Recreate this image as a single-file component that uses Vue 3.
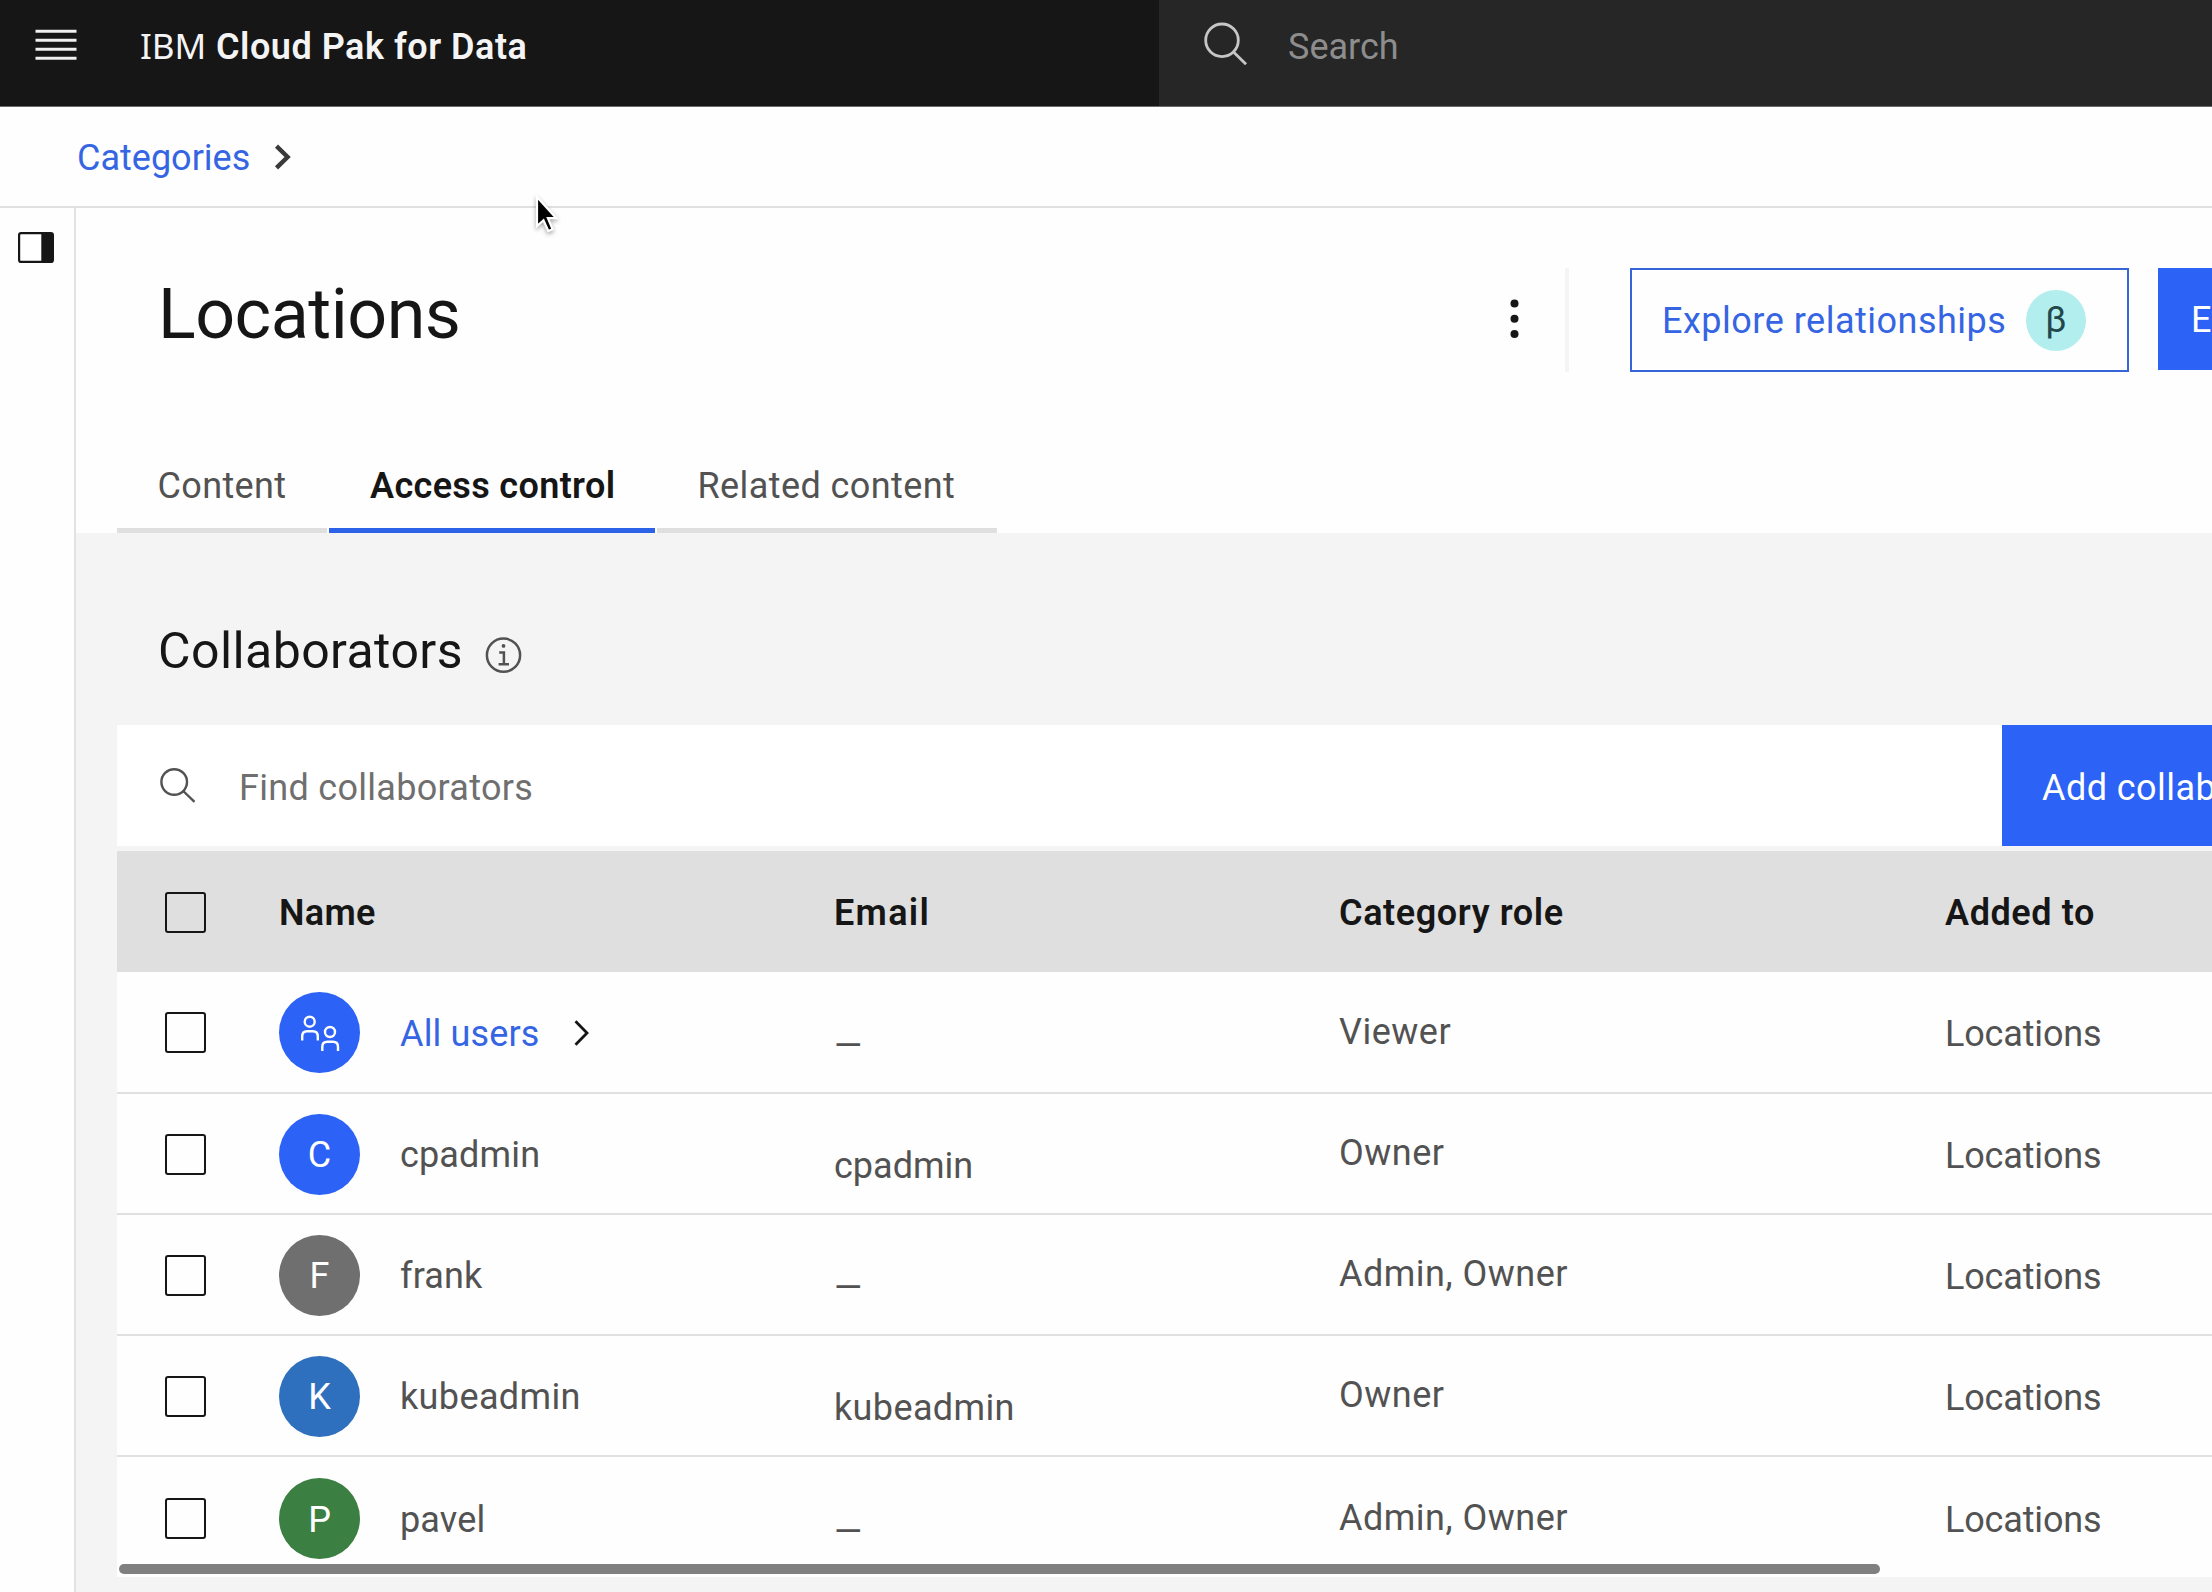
<script setup>
const tabs = [
  { label: 'Content', cls: 'tab-content' },
  { label: 'Access control', cls: 'tab-access active' },
  { label: 'Related content', cls: 'tab-related' },
]

const rows = [
  { name: 'All users', group: true, color: '#2c62f6', email: '—', role: 'Viewer' },
  { name: 'cpadmin', initial: 'C', color: '#2c62f6', email: 'cpadmin', role: 'Owner' },
  { name: 'frank', initial: 'F', color: '#6f6f6f', email: '—', role: 'Admin, Owner' },
  { name: 'kubeadmin', initial: 'K', color: '#2e70bd', email: 'kubeadmin', role: 'Owner' },
  { name: 'pavel', initial: 'P', color: '#3b7f42', email: '—', role: 'Admin, Owner' },
]
</script>

<template>
  <div class="app">
    <header class="topbar">
      <div class="brand">
        <svg class="menu" width="42" height="32" viewBox="0 0 42 32">
          <path d="M0.5 2.3H41.5M0.5 11.3H41.5M0.5 20.3H41.5M0.5 29.3H41.5" stroke="#f0f0f0" stroke-width="3" />
        </svg>
        <span class="ibm">IBM</span>
        <span class="product">Cloud Pak for Data</span>
      </div>
      <div class="global-search">
        <svg width="44" height="44" viewBox="0 0 44 44" fill="none" stroke="#c6c6c6" stroke-width="2.8">
          <circle cx="18" cy="18.3" r="16.3" />
          <path d="M29.5 30L42 42.2" />
        </svg>
        <span>Search</span>
      </div>
    </header>

    <nav class="breadcrumb">
      <a>Categories</a>
      <svg width="18" height="26" viewBox="0 0 18 26" fill="none" stroke="#3a3a3a" stroke-width="4.4">
        <path d="M2.5 2.2L13.6 13L2.5 23.8" />
      </svg>
    </nav>

    <div class="body">
      <aside class="rail">
        <svg width="36" height="31" viewBox="0 0 36 31">
          <rect x="1.1" y="1.1" width="33.8" height="28.8" rx="2" fill="#fff" stroke="#161616" stroke-width="2.2" />
          <path d="M23.3 1H33.5Q35 1 35 2.5V28.5Q35 30 33.5 30H23.3Z" fill="#161616" />
        </svg>
      </aside>

      <main class="main">
        <section class="page-head">
          <div class="title-row">
            <h1>Locations</h1>
            <div class="actions">
              <svg class="overflow" width="10" height="42" viewBox="0 0 10 42" fill="#161616">
                <circle cx="5.5" cy="5.6" r="4" /><circle cx="5.5" cy="20.8" r="4" /><circle cx="5.5" cy="36" r="4" />
              </svg>
              <div class="divider"></div>
              <button class="explore">
                <span class="explore-label">Explore relationships</span>
                <span class="beta">β</span>
              </button>
              <button class="edit">E</button>
            </div>
          </div>
          <div class="tabs">
            <div v-for="t in tabs" :key="t.label" class="tab" :class="t.cls">{{ t.label }}</div>
          </div>
        </section>

        <section class="panel">
          <div class="panel-title">
            <h2>Collaborators</h2>
            <svg width="37" height="37" viewBox="0 0 37 37" fill="none" stroke="#525252" stroke-width="2.5">
              <circle cx="18.5" cy="18.2" r="16.6" />
              <path d="M14.2 15.4H18.9V27.2M13.6 27.2H24" />
              <circle cx="18.5" cy="8.9" r="1.9" fill="#525252" stroke="none" />
            </svg>
          </div>

          <div class="toolbar">
            <div class="find">
              <svg width="36" height="35" viewBox="0 0 36 35" fill="none" stroke="#525252" stroke-width="2.4">
                <circle cx="14.2" cy="14" r="12.8" />
                <path d="M23.2 23L34.5 33.8" />
              </svg>
              <span>Find collaborators</span>
            </div>
            <button class="add">Add collab</button>
          </div>

          <div class="table">
            <div class="row head">
              <div class="c-check"><i class="box"></i></div>
              <div class="c-name">Name</div>
              <div class="c-email email-label">Email</div>
              <div class="c-role">Category role</div>
              <div class="c-added">Added to</div>
            </div>
            <div v-for="r in rows" :key="r.name" class="row item" :class="'row-' + r.name.split(' ')[0]">
              <div class="c-check"><i class="box"></i></div>
              <div class="c-name">
                <span class="avatar" :style="{ background: r.color }">
                  <svg v-if="r.group" width="40" height="36" viewBox="0 0 40 36" fill="none" stroke="#fff" stroke-width="2.4">
                    <circle cx="9.7" cy="6.7" r="5" />
                    <path d="M2.2 25.5V21.5Q2.2 16.3 7.2 16.3H12.8Q17.8 16.3 17.8 21.5V25.5" />
                    <circle cx="30" cy="17" r="5" />
                    <path d="M22.3 36V31.8Q22.3 26.8 27.3 26.8H33Q38 26.8 38 31.8V36" />
                  </svg>
                  <span v-else class="initial">{{ r.initial }}</span>
                </span>
                <span class="label" :class="{ link: r.group }">{{ r.name }}</span>
                <svg v-if="r.group" class="chev" width="16" height="28" viewBox="0 0 16 28" fill="none" stroke="#161616" stroke-width="2.8">
                  <path d="M1.5 2.3L13 14L1.5 25.7" />
                </svg>
              </div>
              <div class="c-email" :class="{ empty: r.email === '—' }">{{ r.email }}</div>
              <div class="c-role">{{ r.role }}</div>
              <div class="c-added">Locations</div>
            </div>
            <div class="scroll"><div class="thumb"></div></div>
          </div>
        </section>
      </main>
    </div>

    <svg class="cursor" width="34" height="48" viewBox="0 0 34 48">
      <path d="M5 5V34L11.5 28.2L16.3 39L20.6 37.2L15.9 26.2H24.3Z" fill="#000" stroke="#fff" stroke-width="2.2" />
    </svg>
  </div>
</template>

<style>
body {
  background: #fff;
  overflow: hidden;
}
</style>

<style scoped>
.app {
  position: relative;
  box-sizing: border-box;
  width: 2212px;
  height: 1592px;
  overflow: hidden;
  display: flex;
  flex-direction: column;
  background: #fefefe;
  color: #161616;
  font-family: Roboto, "Noto Sans", sans-serif;
  font-size: 36px;
  line-height: 48px;
  white-space: nowrap;
}
.app * { box-sizing: border-box; }
svg { display: block; flex: none; }
h1, h2 { margin: 0; font-weight: 400; }
button {
  font: inherit;
  border: 0;
  border-radius: 0;
  padding: 0;
  text-align: left;
  white-space: nowrap;
}

.topbar { display: flex; height: 107px; flex: none; border-bottom: 1px solid #6b6b6b; background: #161616; color: #f4f4f4; }
.brand { width: 1159px; padding: 22px 0 0 35px; display: flex; align-items: flex-start; }
.menu { margin-top: 7px; }
.ibm { margin-left: 63px; width: 76px; font-family: "Noto Sans", sans-serif; font-size: 35px; }
.product { font-weight: 600; letter-spacing: 0.52px; margin-top: 1px; }
.global-search { flex: 1; background: #262626; color: #8d8d8d; display: flex; padding: 22px 0 0 45px; }
.global-search span { margin: 1px 0 0 40px; }

.breadcrumb { display: flex; height: 101px; flex: none; padding: 24px 0 0 77px; border-bottom: 2px solid #e0e0e0; color: #3565e3; }
.breadcrumb a { width: 197px; margin-top: 2px; line-height: 51px; }
.breadcrumb svg { margin-top: 13px; }

.body { flex: 1; display: flex; min-height: 0; }
.rail { width: 76px; flex: none; border-right: 2px solid #e2e2e2; padding: 24px 0 0 18px; }
.main { flex: 1; min-width: 0; display: flex; flex-direction: column; }

.page-head { height: 325px; flex: none; display: flex; flex-direction: column; justify-content: space-between; }
.title-row { display: flex; justify-content: space-between; padding: 60px 0 0 82px; }
h1 { font-size: 70px; line-height: 98px; letter-spacing: -0.5px; margin-top: -3px; }
.actions { display: flex; align-items: flex-start; width: 703px; flex: none; }
.overflow { margin-top: 30px; }
.divider { flex: none; width: 4px; height: 104px; background: #f4f4f4; margin-left: 46px; }
.explore { flex: none; width: 499px; height: 104px; margin-left: 61px; border: 2px solid #3565d6; background: #fefefe; color: #3565e3; display: flex; align-items: center; padding-left: 30px; letter-spacing: 0.5px; }
.explore-label { width: 364px; padding-top: 2px; }
.beta { width: 60px; height: 61px; border-radius: 50%; background: #b2eeee; color: #22484b; line-height: 61px; text-align: center; letter-spacing: 0; }
.edit { flex: none; margin-left: 29px; width: 140px; height: 102px; background: #2c62f6; color: #fff; padding-left: 33px; line-height: 104px; }

.tabs { display: flex; gap: 2px; padding-left: 41px; }
.tab { height: 72px; line-height: 51px; border-bottom: 5px solid #dfdfdf; color: #525252; padding-left: 40.500px; letter-spacing: 0.35px; }
.tab-content { width: 210px; }
.tab-access { width: 326px; padding-left: 41px; }
.tab-related { width: 340px; padding-left: 40.500px; letter-spacing: 0.42px; }
.tab.active { color: #161616; font-weight: 600; border-color: #2c62e8; }

.panel { flex: 1; min-height: 0; background: #f4f4f4; padding-left: 41px; display: flex; flex-direction: column; }
.panel-title { height: 192px; flex: none; display: flex; padding: 86px 0 0 41px; }
h2 { font-size: 50px; line-height: 65px; letter-spacing: 0.42px; width: 327px; }
.panel-title svg { margin-top: 18px; }
.toolbar { display: flex; height: 121px; flex: none; background: #fff; }
.find { width: 1885px; flex: none; display: flex; align-items: center; padding-left: 43px; color: #6f6f6f; letter-spacing: 0.3px; }
.find svg { margin-top: 0; }
.find span { margin: 4px 0 0 43px; }
.add { flex: none; width: 420px; background: #2c62f6; color: #fff; padding: 4px 0 0 40px; letter-spacing: 0.45px; }

.table { margin-top: 5px; background: #fefefe; height: 726px; flex: none; overflow: hidden; }
.row { display: grid; grid-template-columns: 162px 555px 505px 606px 1fr; height: 121px; }
.row > div { display: flex; align-items: center; }
.head { background: #dfdfdf; font-weight: 600; }
.head > div { padding-top: 2px; }
.c-check { padding-left: 48px; }
.head .c-check { padding-top: 1px; }
.box { width: 41px; height: 41px; border: 2px solid #161616; border-radius: 3px; }
.head .c-name { letter-spacing: 0.3px; }
.head .email-label { letter-spacing: 1.3px; }
.head .c-role, .head .c-added { letter-spacing: 0.6px; }

.item { color: #525252; border-bottom: 2px solid #e0e0e0; }
.item.row-All { height: 122px; }
.item.row-pavel { height: 122px; border-bottom: 0; }
.item > .c-name, .item > .c-check { padding-top: 1px; }
.avatar { width: 81px; height: 81px; border-radius: 50%; color: #fff; display: flex; align-items: center; justify-content: center; }
.initial { padding-top: 2px; }
.item .label { margin: 2px 0 0 40px; letter-spacing: 0.15px; }
.row-kubeadmin .label, .row-kubeadmin .c-email { letter-spacing: 0.37px; }
.item .link { color: #3565e3; }
.chev { margin-left: 34px; }
.item > .c-email { padding-top: 24px; }
.item > .c-email.empty { padding-top: 27px; }
.item > .c-role { padding-bottom: 1px; letter-spacing: 0.5px; }
.item > .c-added { padding-top: 4px; letter-spacing: -0.15px; }

.scroll { height: 13px; margin-top: -16px; padding: 1px 0 0 2px; position: relative; }
.thumb { width: 1761px; height: 10px; border-radius: 5px; background: #808080; }

.cursor { position: absolute; left: 532px; top: 192px; filter: drop-shadow(0 2px 2px rgba(0, 0, 0, 0.35)); }
</style>
